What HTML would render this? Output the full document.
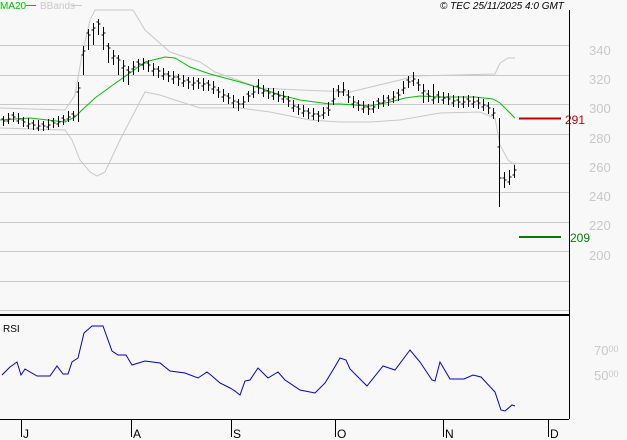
<!DOCTYPE html>
<html><head><meta charset="utf-8"><style>
html,body{margin:0;padding:0;background:#f8f8f8;width:627px;height:440px;overflow:hidden}
svg{display:block;font-family:"Liberation Sans",sans-serif}
</style></head><body>
<svg width="627" height="440" viewBox="0 0 627 440" xmlns="http://www.w3.org/2000/svg">
<rect width="627" height="440" fill="#f8f8f8"/>
<g stroke="#c8c8c8" stroke-width="1">
<line x1="0" y1="45.5" x2="569" y2="45.5"/>
<line x1="0" y1="75.5" x2="569" y2="75.5"/>
<line x1="0" y1="104.5" x2="569" y2="104.5"/>
<line x1="0" y1="134.5" x2="569" y2="134.5"/>
<line x1="0" y1="163.5" x2="569" y2="163.5"/>
<line x1="0" y1="192.5" x2="569" y2="192.5"/>
<line x1="0" y1="222.5" x2="569" y2="222.5"/>
<line x1="0" y1="251.5" x2="569" y2="251.5"/>
<line x1="0" y1="281.5" x2="569" y2="281.5"/>
<line x1="0" y1="310.5" x2="569" y2="310.5"/>
</g>
<g fill="#c8c8c8" font-size="13">
<text x="589" y="55">340</text><text x="589" y="84">320</text><text x="589" y="113">300</text>
<text x="589" y="143">280</text><text x="589" y="172">260</text><text x="589" y="201">240</text>
<text x="589" y="230">220</text><text x="589" y="260">200</text>
<text x="594" y="355">70<tspan font-size="9" dy="-3">00</tspan></text>
<text x="594" y="380">50<tspan font-size="9" dy="-3">00</tspan></text>
</g>
<polyline fill="none" stroke="#c8c8c8" points="0,108 65,110 75,95 82,55 90,20 95,10 133,10 145,30 170,52 200,62 215,72 260,88 300,90 350,92 400,80 415,76 495,74 500,63 508,58 515,58"/>
<polyline fill="none" stroke="#c8c8c8" points="0,128 65,130 72,140 80,160 90,172 97,176 105,172 120,140 133,115 145,92 160,95 175,100 200,108 240,108 270,112 310,120 340,122 370,122 400,120 440,113 480,112 495,118 500,145 508,160 515,165"/>
<polyline fill="none" stroke="#00c000" stroke-width="1" points="0,120 30,118 65,122 75,117 82,110 95,98 110,87 130,73 145,62 165,57 175,58 190,67 210,74 240,82 260,88 280,95 300,100 330,104 340,104 370,106 390,102 405,98 420,96 440,97 475,97 493,99 500,103 515,118"/>
<path fill="none" stroke="#000" stroke-width="1" d="
M3.5,116V126M1.5,119h2M3.5,121h2
M8.5,113V124M6.5,121h2M8.5,119h2
M13.5,112V122M11.5,115h2M13.5,117h2
M18.5,113V124M16.5,121h2M18.5,119h2
M23.5,117V127M21.5,120h2M23.5,122h2
M28.5,118V129M26.5,126h2M28.5,124h2
M33.5,120V130M31.5,123h2M33.5,125h2
M38.5,120V131M36.5,128h2M38.5,126h2
M43.5,121V131M41.5,124h2M43.5,126h2
M48.5,119V130M46.5,127h2M48.5,125h2
M53.5,118V128M51.5,121h2M53.5,123h2
M58.5,116V127M56.5,124h2M58.5,122h2
M63.5,115V125M61.5,118h2M63.5,120h2
M68.5,111V122M66.5,119h2M68.5,117h2
M73.5,111V121M71.5,114h2M73.5,116h2
M78.5,82V122M76.5,92h2M78.5,88h2
M83.5,46V75M81.5,55h2M83.5,51h2
M88.5,29V50M86.5,33h2M88.5,35h2
M93.5,23V45M91.5,30h2M93.5,28h2
M98.5,19V35M96.5,22h2M98.5,24h2
M103.5,27V50M101.5,35h2M103.5,33h2
M108.5,43V63M106.5,46h2M108.5,48h2
M113.5,50V65M111.5,58h2M113.5,56h2
M118.5,55V75M116.5,58h2M118.5,60h2
M123.5,60V82M121.5,68h2M123.5,66h2
M128.5,66V85M126.5,70h2M128.5,72h2
M133.5,61V75M131.5,69h2M133.5,67h2
M138.5,59V72M136.5,62h2M138.5,64h2
M143.5,58V70M141.5,65h2M143.5,63h2
M148.5,60V72M146.5,63h2M148.5,65h2
M153.5,63V76M151.5,71h2M153.5,69h2
M158.5,66V78M156.5,69h2M158.5,71h2
M163.5,68V80M161.5,76h2M163.5,74h2
M168.5,71V82M166.5,74h2M168.5,76h2
M173.5,71V84M171.5,79h2M173.5,77h2
M178.5,74V86M176.5,77h2M178.5,79h2
M183.5,75V87M181.5,83h2M183.5,81h2
M188.5,77V89M186.5,80h2M188.5,82h2
M193.5,77V90M191.5,85h2M193.5,83h2
M198.5,78V89M196.5,81h2M198.5,83h2
M203.5,78V91M201.5,86h2M203.5,84h2
M208.5,80V91M206.5,83h2M208.5,85h2
M213.5,81V94M211.5,89h2M213.5,87h2
M218.5,87V98M216.5,90h2M218.5,92h2
M223.5,89V102M221.5,97h2M223.5,95h2
M228.5,93V104M226.5,96h2M228.5,98h2
M233.5,95V108M231.5,103h2M233.5,101h2
M238.5,99V111M236.5,102h2M238.5,104h2
M243.5,96V108M241.5,104h2M243.5,102h2
M248.5,91V102M246.5,94h2M248.5,96h2
M253.5,86V98M251.5,94h2M253.5,92h2
M258.5,79V94M256.5,86h2M258.5,88h2
M263.5,85V97M261.5,93h2M263.5,91h2
M268.5,88V99M266.5,91h2M268.5,93h2
M273.5,88V100M271.5,96h2M273.5,94h2
M278.5,91V102M276.5,94h2M278.5,96h2
M283.5,91V103M281.5,99h2M283.5,97h2
M288.5,96V107M286.5,99h2M288.5,101h2
M293.5,100V112M291.5,108h2M293.5,106h2
M298.5,104V115M296.5,107h2M298.5,109h2
M303.5,105V117M301.5,113h2M303.5,111h2
M308.5,108V119M306.5,111h2M308.5,113h2
M313.5,108V120M311.5,116h2M313.5,114h2
M318.5,111V122M316.5,114h2M318.5,116h2
M323.5,107V119M321.5,115h2M323.5,113h2
M328.5,102V116M326.5,108h2M328.5,110h2
M333.5,88V105M331.5,101h2M333.5,99h2
M338.5,85V97M336.5,90h2M338.5,92h2
M343.5,82V96M341.5,92h2M343.5,90h2
M348.5,90V103M346.5,95h2M348.5,97h2
M353.5,96V108M351.5,104h2M353.5,102h2
M358.5,100V111M356.5,103h2M358.5,105h2
M363.5,101V113M361.5,109h2M363.5,107h2
M368.5,104V115M366.5,107h2M368.5,109h2
M373.5,101V113M371.5,109h2M373.5,107h2
M378.5,98V109M376.5,101h2M378.5,103h2
M383.5,95V107M381.5,103h2M383.5,101h2
M388.5,95V106M386.5,98h2M388.5,100h2
M393.5,91V103M391.5,99h2M393.5,97h2
M398.5,89V101M396.5,93h2M398.5,95h2
M403.5,81V94M401.5,90h2M403.5,88h2
M408.5,76V88M406.5,80h2M408.5,82h2
M413.5,72V86M411.5,81h2M413.5,79h2
M418.5,79V91M416.5,83h2M418.5,85h2
M423.5,84V103M421.5,93h2M423.5,91h2
M428.5,90V102M426.5,94h2M428.5,96h2
M433.5,84V104M431.5,100h2M433.5,98h2
M438.5,91V103M436.5,95h2M438.5,97h2
M443.5,92V104M441.5,100h2M443.5,98h2
M448.5,93V105M446.5,97h2M448.5,99h2
M453.5,95V107M451.5,103h2M453.5,101h2
M458.5,96V108M456.5,100h2M458.5,102h2
M463.5,96V108M461.5,104h2M463.5,102h2
M468.5,95V107M466.5,99h2M468.5,101h2
M473.5,96V108M471.5,104h2M473.5,102h2
M478.5,97V109M476.5,101h2M478.5,103h2
M483.5,99V111M481.5,107h2M483.5,105h2
M488.5,102V114M486.5,106h2M488.5,108h2
M493.5,108V119M491.5,115h2M493.5,113h2
M499.5,118V207M497.5,147h2M499.5,178h2
M504.5,172V188M502.5,178h2M504.5,180h2
M509.5,170V185M507.5,182h2M509.5,177h2
M514.5,165V178M512.5,175h2M514.5,170h2"/>
<line x1="519" y1="118.5" x2="561" y2="118.5" stroke="#c00000" stroke-width="2"/>
<text x="565" y="124" fill="#c00000" font-size="12">291</text>
<line x1="519" y1="237" x2="561" y2="237" stroke="#008000" stroke-width="2"/>
<text x="570" y="242" fill="#008000" font-size="12">209</text>
<line x1="0" y1="315" x2="569" y2="315" stroke="#000" stroke-width="2"/>
<line x1="569.5" y1="10" x2="569.5" y2="419" stroke="#000"/>
<line x1="0" y1="419.5" x2="569" y2="419.5" stroke="#000"/>
<text x="3" y="332" font-size="10" fill="#000">RSI</text>
<polyline fill="none" stroke="#0000c8" stroke-width="1" points="2,375 10,367 17,362 21,375 25,369 37,376 50,376 57,366 63,374 68,374 72,362 78,358 84,333 92,326 103,326 112,351 118,355 126,355 132,365 145,361 160,363 170,371 185,373 198,378 207,372 212,376 220,383 230,388 235,391 240,395 245,381 250,380 258,368 268,378 278,372 285,380 300,390 315,393 325,383 333,370 340,358 346,360 350,369 367,386 383,366 395,370 410,350 420,362 432,380 435,381 440,362 450,379 464,379 473,375 481,377 495,392 501,410 505,411 512,405 515,406"/>
<g stroke="#000"><line x1="21.5" y1="420" x2="21.5" y2="437"/><line x1="131.5" y1="420" x2="131.5" y2="437"/><line x1="231.5" y1="420" x2="231.5" y2="437"/><line x1="335.5" y1="420" x2="335.5" y2="437"/><line x1="443.5" y1="420" x2="443.5" y2="437"/><line x1="548.5" y1="420" x2="548.5" y2="437"/></g>
<g font-size="12" fill="#000"><text x="23" y="438">J</text><text x="133" y="438">A</text><text x="233" y="438">S</text><text x="337" y="438">O</text><text x="445" y="438">N</text><text x="550" y="438">D</text></g>
<text x="0" y="9" font-size="10" fill="#00c000">MA20</text>
<line x1="26" y1="5.5" x2="36" y2="5.5" stroke="#00c000"/>
<text x="40" y="9" font-size="10" fill="#c8c8c8">BBands</text>
<line x1="72" y1="5.5" x2="82" y2="5.5" stroke="#c8c8c8"/>
<text x="440" y="9" font-size="10" font-style="italic" fill="#000">© TEC 25/11/2025 4:0 GMT</text>
</svg>
</body></html>
